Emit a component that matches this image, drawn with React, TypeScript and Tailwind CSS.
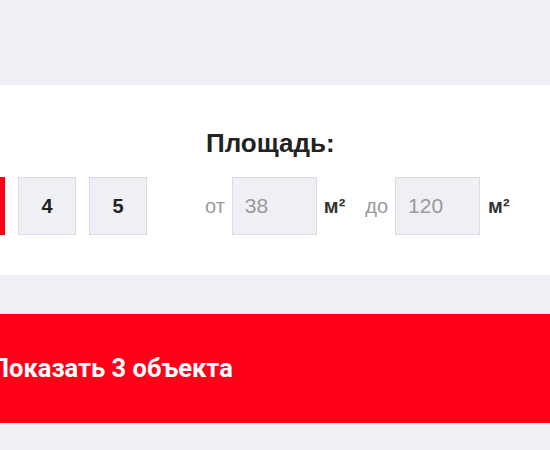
import React from "react";

const rooms = ["1", "2", "3", "4", "5"];
const activeRoom = "3";

function RoomButton({ label, active }: { label: string; active: boolean }) {
  return (
    <button
      type="button"
      className={`flex h-[58px] w-[58px] shrink-0 items-center justify-center border text-[20px] font-bold ${
        active
          ? "border-[#ff0019] bg-[#ff0019] text-white"
          : "border-[#d9dce2] bg-[#eef0f5] text-[#222]"
      }`}
    >
      {label}
    </button>
  );
}

function AreaInput({ value }: { value: string }) {
  return (
    <div className="flex h-[58px] w-[85px] shrink-0 items-center border border-[#d9dce2] bg-[#eef0f5] pl-[12px] text-[21px] text-[#999]">
      {value}
    </div>
  );
}

export default function App() {
  return (
    <div
      className="h-[450px] w-[550px] overflow-hidden bg-[#eef0f5] pt-[85px]"
      style={{ fontFamily: '"Liberation Sans", Arial, sans-serif' }}
    >
      <section className="flex h-[190px] bg-white pt-[44px]">
        <div className="ml-[-195px] flex w-[400px] shrink-0 flex-col gap-[20px]">
          <h3 className="h-[28px] text-[26px] font-bold leading-[28px] text-[#222]">
            Комнаты:
          </h3>
          <div className="flex gap-[13px]">
            {rooms.map((r) => (
              <RoomButton key={r} label={r} active={r === activeRoom} />
            ))}
          </div>
        </div>
        <div className="flex shrink-0 flex-col gap-[20px]">
          <h3 className="h-[28px] pl-px text-[26px] font-bold leading-[28px] text-[#222]">
            Площадь:
          </h3>
          <div className="flex items-center text-[20px]">
            <span className="mr-[7px] text-[#999]">от</span>
            <AreaInput value="38" />
            <span className="ml-[7px] font-bold text-[#333]">м²</span>
            <span className="ml-[20px] mr-[7px] text-[#999]">до</span>
            <AreaInput value="120" />
            <span className="ml-[8px] font-bold text-[#333]">м²</span>
          </div>
        </div>
      </section>
      <div className="mt-[39px] flex h-[109px] items-center bg-[#ff0019]">
        <span
          className="ml-[-9px] text-[25.5px] font-bold text-white"
          style={{ fontFamily: "Roboto, sans-serif" }}
        >
          Показать 3 объекта
        </span>
      </div>
    </div>
  );
}
